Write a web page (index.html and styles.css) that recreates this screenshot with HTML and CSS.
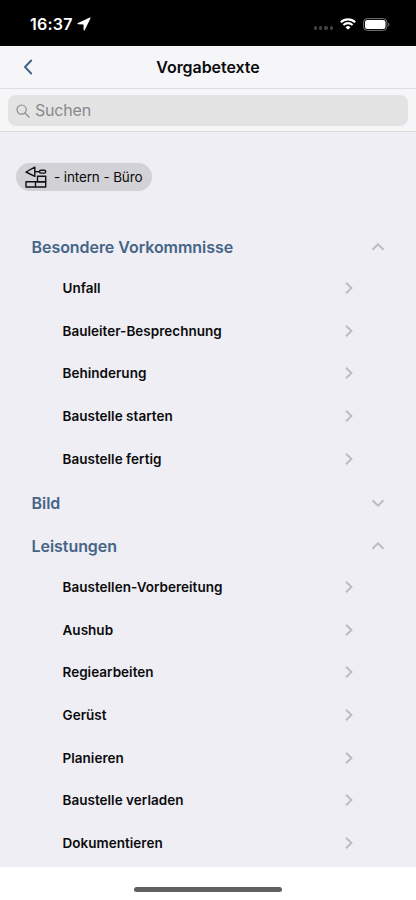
FILE: index.html
```html
<!DOCTYPE html>
<html lang="de">
<head>
<meta charset="utf-8">
<meta name="viewport" content="width=device-width, initial-scale=1">
<title>Vorgabetexte</title>
<link rel="stylesheet" href="styles.css">
</head>
<body>
<svg class="defs" width="0" height="0" aria-hidden="true">
  <symbol id="right" viewBox="0 0 8 12"><path d="M1 .7 6.5 6 1 11.3"/></symbol>
  <symbol id="up" viewBox="0 0 12 8"><path d="M.5 6.7 6 1.3l5.5 5.4"/></symbol>
  <symbol id="down" viewBox="0 0 12 8"><path d="M.5 1.3 6 6.7l5.5-5.4"/></symbol>
</svg>
<header class="status">
  <span class="clock">16:37</span>
  <svg class="location" width="14" height="14" viewBox="0 0 14 14"><path d="M12.9.6.9 6c-.8.4-.6 1.2.2 1.2l5.4.2.1 5.4c0 .8.8 1 1.2.2L13.5 1.3c.2-.6-.1-.9-.6-.7z" fill="#fff"/></svg>
  <span class="dots"><i></i><i></i><i></i><i></i></span>
  <svg class="wifi" width="16" height="12" viewBox="0 0 16 12" fill="none" stroke="#fff" stroke-width="2.1"><path d="M.8 4.2a10.5 10.5 0 0 1 14.4 0M3.4 7a6.7 6.7 0 0 1 9.2 0"/><path d="M8 11.8 5.5 9.3a3.6 3.6 0 0 1 5 0z" fill="#fff" stroke="none"/></svg>
  <svg class="battery" width="27" height="13" viewBox="0 0 27 13"><rect x=".6" y=".6" width="23.3" height="11.8" rx="3.6" fill="none" stroke="#777" stroke-width="1"/><rect x="2" y="2" width="20.5" height="9" rx="2.3" fill="#fff"/><path d="M25.2 4.5c1.6.5 1.6 3.5 0 4z" fill="#777"/></svg>
</header>
<nav class="navbar">
  <svg class="back" width="10" height="16" viewBox="0 0 10 16"><path d="M8.2 1.5 2 8l6.2 6.5"/></svg>
  <h1>Vorgabetexte</h1>
</nav>
<div class="searchbar">
  <div class="field">
    <svg width="14" height="14" viewBox="0 0 14 14" fill="none" stroke="#8b8b8e" stroke-width="1.2" stroke-linecap="round"><circle cx="5.6" cy="5.6" r="4.6"/><path d="m9 9 4 4"/></svg>
    <span>Suchen</span>
  </div>
</div>
<main>
  <div class="chip">
    <svg width="22" height="22" viewBox="0 0 22 22" fill="none" stroke="#111" stroke-width="1.4" stroke-linejoin="round"><path d="M1 6 9.8 1.2v9.2z"/><path d="M9.8 5.7h5"/><rect x="14.5" y="4.3" width="6.2" height="2.8" rx="1.4"/><rect x="12.5" y="10.3" width="8.2" height="5.4"/><path d="M1 15.7h19.7v5.3H1zM10.5 15.7V21"/></svg>
    <span>- intern - Büro</span>
  </div>
  <section>
    <h2><span>Besondere Vorkommnisse</span><svg width="12" height="8"><use href="#up"/></svg></h2>
    <ul>
      <li><span>Unfall</span><svg width="8" height="12"><use href="#right"/></svg></li>
      <li><span>Bauleiter-Besprechnung</span><svg width="8" height="12"><use href="#right"/></svg></li>
      <li><span>Behinderung</span><svg width="8" height="12"><use href="#right"/></svg></li>
      <li><span>Baustelle starten</span><svg width="8" height="12"><use href="#right"/></svg></li>
      <li><span>Baustelle fertig</span><svg width="8" height="12"><use href="#right"/></svg></li>
    </ul>
  </section>
  <section>
    <h2><span>Bild</span><svg width="12" height="8"><use href="#down"/></svg></h2>
  </section>
  <section>
    <h2><span>Leistungen</span><svg width="12" height="8"><use href="#up"/></svg></h2>
    <ul>
      <li><span>Baustellen-Vorbereitung</span><svg width="8" height="12"><use href="#right"/></svg></li>
      <li><span>Aushub</span><svg width="8" height="12"><use href="#right"/></svg></li>
      <li><span>Regiearbeiten</span><svg width="8" height="12"><use href="#right"/></svg></li>
      <li><span>Gerüst</span><svg width="8" height="12"><use href="#right"/></svg></li>
      <li><span>Planieren</span><svg width="8" height="12"><use href="#right"/></svg></li>
      <li><span>Baustelle verladen</span><svg width="8" height="12"><use href="#right"/></svg></li>
      <li><span>Dokumentieren</span><svg width="8" height="12"><use href="#right"/></svg></li>
    </ul>
  </section>
</main>
<footer><div class="home"></div></footer>
</body>
</html>
```
FILE: styles.css
```css
* { box-sizing: border-box; }
body {
  margin: 0;
  height: 900px;
  display: flex;
  flex-direction: column;
  overflow: hidden;
  background: #efeef4;
  color: #0b0b0d;
  font-family: Inter, "Liberation Sans", sans-serif;
}
svg { display: block; flex: none; }
.defs { position: absolute; }
h1, h2, ul { margin: 0; padding: 0; }

.status {
  height: 46px;
  flex: none;
  display: flex;
  align-items: center;
  padding: 2px 26px 0 30px;
  background: #000;
  color: #fff;
}
.clock { font-size: 16px; font-weight: 600; letter-spacing: .25px; }
.location { margin-left: 4px; }
.dots { display: flex; gap: 2px; margin: 8px 7px 0 auto; }
.dots i { width: 3.3px; height: 3.3px; border-radius: 50%; background: #424242; }
.battery { margin-left: 7px; }

.navbar {
  height: 43px;
  flex: none;
  display: grid;
  grid-template-columns: 1fr auto 1fr;
  align-items: center;
  background: #f6f6f8;
  border-bottom: 1px solid #dedee1;
}
.back { margin-left: 23px; fill: none; stroke: #456486; stroke-width: 2; stroke-linecap: round; stroke-linejoin: round; }
h1 { font-size: 16px; font-weight: 600; letter-spacing: -.05px; line-height: 20px; }

.searchbar {
  height: 43px;
  flex: none;
  padding: 6px 8px;
  background: #f6f6f8;
  border-bottom: 1px solid #dadadd;
}
.field {
  height: 31px;
  display: flex;
  align-items: center;
  gap: 5px;
  padding-left: 8px;
  border-radius: 8px;
  background: #e3e3e4;
  color: #88888b;
  font-size: 16px;
  letter-spacing: -.2px;
}
.field span { padding-bottom: 2px; }

main { flex: 1; min-height: 0; overflow: hidden; padding-top: 31px; }
.chip {
  width: 136px;
  height: 28px;
  margin: 0 0 32.75px 16px;
  padding-left: 9px;
  display: flex;
  align-items: center;
  gap: 7px;
  border-radius: 14px;
  background: #d2d1d6;
  font-size: 13.5px;
  letter-spacing: -.12px;
  white-space: nowrap;
}
h2 {
  height: 42.72px;
  display: flex;
  align-items: center;
  justify-content: space-between;
  padding: 3px 32.5px 0 31.5px;
  color: #456486;
  font-size: 16px;
  font-weight: 600;
  letter-spacing: -.05px;
}
ul { list-style: none; }
li {
  height: 42.72px;
  display: flex;
  align-items: center;
  justify-content: space-between;
  padding: 0 63px 0 62.5px;
  font-size: 13.5px;
  font-weight: 600;
  letter-spacing: .02px;
}
h2 svg, li svg { fill: none; stroke: #bcbbc1; stroke-width: 1.9; }

footer { height: 33px; flex: none; display: flex; justify-content: center; padding-top: 20px; background: #fff; }
.home { width: 148px; height: 5px; border-radius: 3px; background: #606060; }
```
